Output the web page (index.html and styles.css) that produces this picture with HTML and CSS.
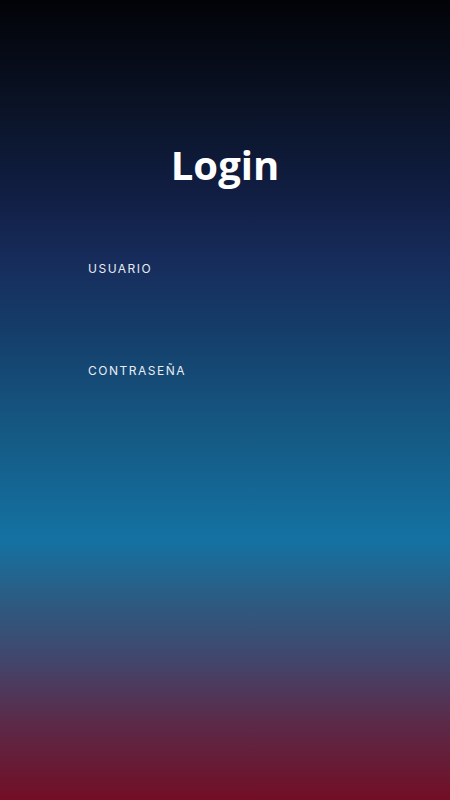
FILE: index.html
```html
<!DOCTYPE html>
<html lang="es">
<head>
<meta charset="utf-8">
<title>Login</title>
<link rel="stylesheet" href="styles.css">
</head>
<body>
<main class="screen">
  <h1 class="title">Login</h1>
  <form class="form">
    <label class="field">
      <span class="label">USUARIO</span>
      <input class="input" type="text">
    </label>
    <label class="field">
      <span class="label">CONTRASEÑA</span>
      <input class="input" type="password">
    </label>
  </form>
</main>
</body>
</html>
```

FILE: styles.css
```css
html, body {
  margin: 0;
  padding: 0;
  height: 100%;
}
body {
  font-family: "Inter", "Open Sans", sans-serif;
  color: #ffffff;
}
.screen {
  box-sizing: border-box;
  height: 800px;
  padding-top: 138px;
  background: linear-gradient(180deg,
    #020307 0px,
    #0a1327 110px,
    #111f45 200px,
    #172c5b 260px,
    #153d6a 330px,
    #155680 420px,
    #1472a2 540px,
    #2c5b82 600px,
    #42466c 660px,
    #5a2b4a 720px,
    #730e25 800px);
}
.title {
  margin: 0;
  text-align: center;
  font-family: "Open Sans", sans-serif;
  font-weight: 700;
  font-size: 40px;
  line-height: 54px;
  letter-spacing: 0;
}
.form {
  display: flex;
  flex-direction: column;
  gap: 62px;
  padding: 69px 0 0 88px;
}
.field {
  display: flex;
  flex-direction: column;
}
.label {
  font-size: 12px;
  line-height: 16px;
  letter-spacing: 1.5px;
  color: #e8ecf4;
}
.input {
  height: 24px;
  width: 270px;
  background: transparent;
  border: none;
  outline: none;
  color: #fff;
  padding: 0;
}
```
